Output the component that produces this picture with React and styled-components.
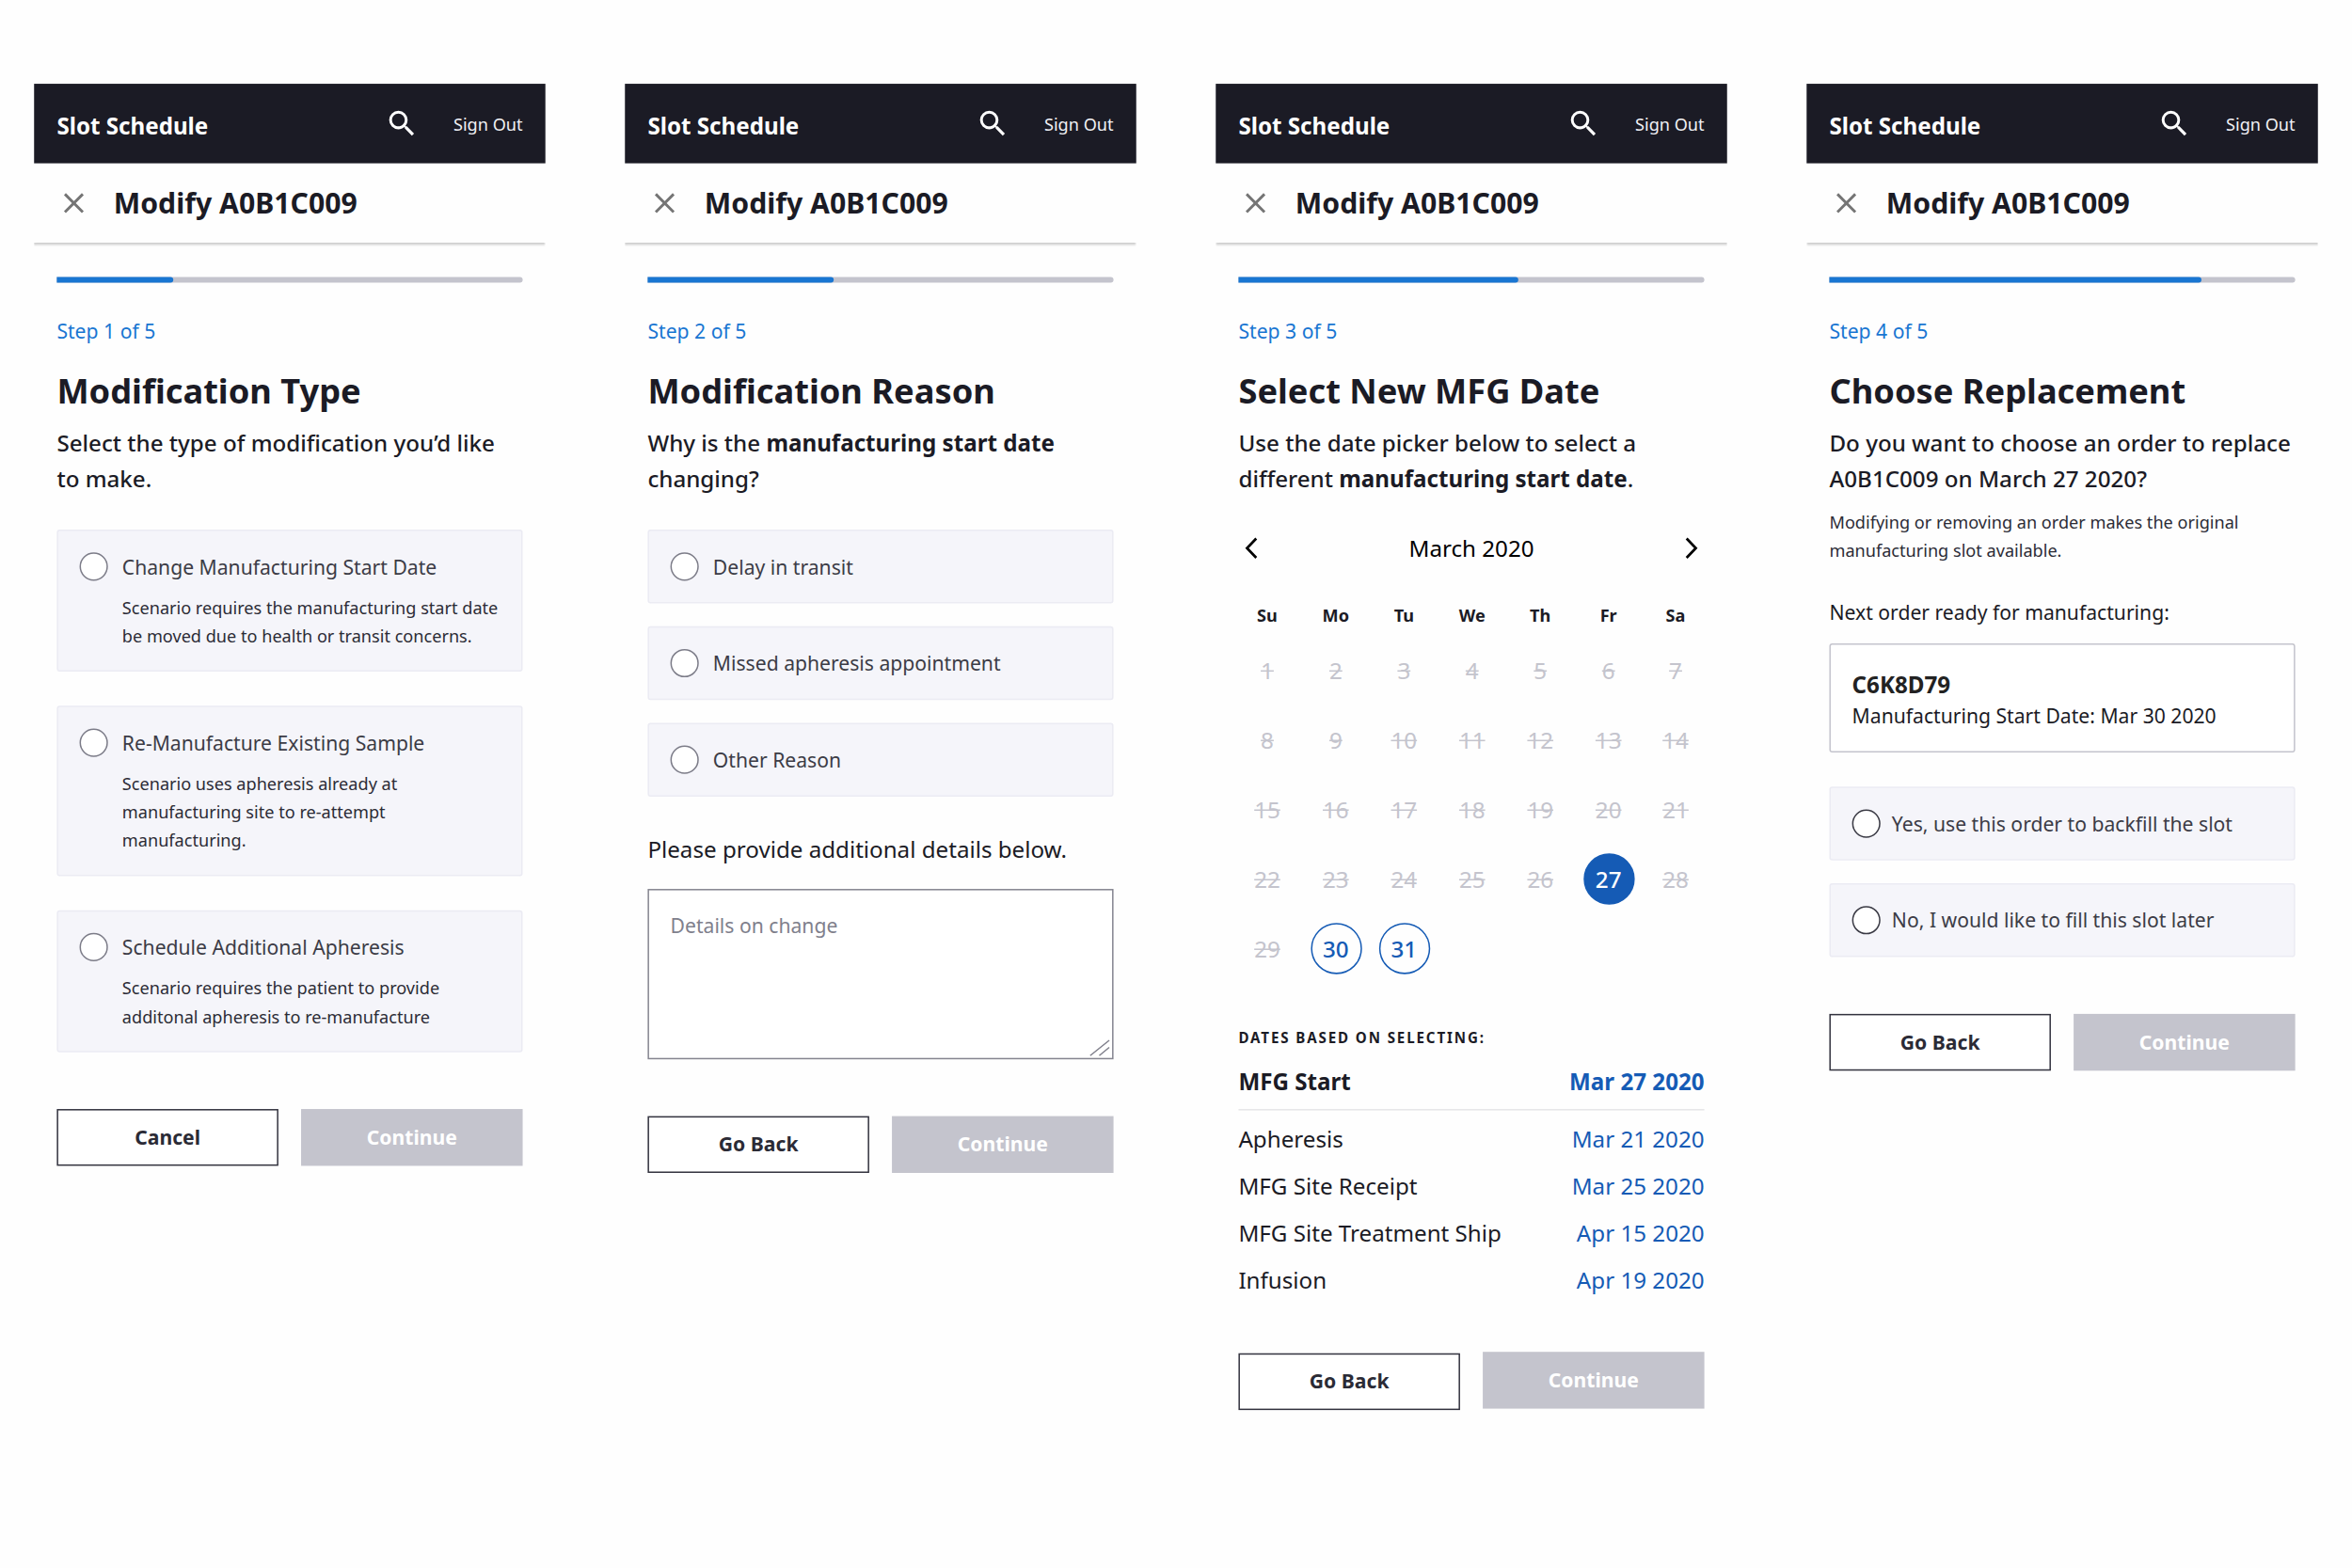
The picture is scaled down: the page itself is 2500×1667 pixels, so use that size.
import React from 'react';
import styled, { createGlobalStyle, css } from 'styled-components';
import { MdSearch } from 'react-icons/md';

const GlobalStyle = createGlobalStyle`
  * {
    box-sizing: border-box;
  }
  body {
    margin: 0;
    min-height: 1667px;
    background: #fefefe;
  }
`;

const nudge = css`
  transform: translateY(0.4px);
`;

// Screens are laid out at 360px wide and the whole board is scaled to fit 2500px
const Board = styled.main`
  display: flex;
  align-items: flex-start;
  gap: 56px;
  width: 1656px;
  height: 1104px;
  padding: 59px 24px 0;
  transform: scale(${2500 / 1656});
  transform-origin: 0 0;
  font-family: 'Noto Sans', sans-serif;
  color: #1b1b25;
`;

const Screen = styled.section`
  width: 360px;
`;

const Header = styled.header`
  display: flex;
  align-items: center;
  height: 56px;
  padding: 0 16px;
  background: #1b1b25;
  color: #fff;
`;

const Brand = styled.span`
  flex: 1;
  padding-top: 2px;
  font-size: 16px;
  font-weight: 700;
  ${nudge}
`;

const SearchIcon = styled(MdSearch)`
  width: 24px;
  height: 24px;
  margin-right: 24px;
`;

const SignOut = styled.span`
  padding-top: 1px;
  font-size: 12px;
  color: #f0f0f4;
`;

const TitleBar = styled.div`
  display: flex;
  align-items: center;
  gap: 20px;
  height: 56px;
  padding: 0 20px;
  box-shadow: 0 1.5px 1.5px 0.5px rgba(0, 0, 0, 0.19);
  clip-path: inset(0 0 -4px 0);
`;

const TitleText = styled.h1`
  margin: 0;
  font-size: 20px;
  line-height: 28px;
  font-weight: 700;
  ${nudge}
`;

const Body = styled.div`
  padding: 24px 16px 0;
`;

const Track = styled.div`
  height: 4px;
  border-radius: 0 2px 2px 0;
  background: #c4c4cd;
`;

const Fill = styled.div`
  height: 4px;
  border-radius: 0 2px 2px 0;
  background: #1976d2;
`;

const Step = styled.p`
  margin: 24px 0 0;
  font-size: 14px;
  line-height: 20px;
  color: #1976d2;
  ${nudge}
`;

const Heading = styled.h2`
  margin: 15px 0 0;
  font-size: 24px;
  line-height: 34px;
  font-weight: 700;
`;

const Lead = styled.p`
  margin: 8px 0 0;
  font-size: 16px;
  line-height: 25px;
  font-weight: 500;
  white-space: nowrap;

  b {
    font-weight: 700;
  }
`;

const Options = styled.div`
  display: flex;
  flex-direction: column;
  gap: ${props => props.$gap || 16}px;
  margin-top: ${props => props.$top || 23}px;
`;

const Option = styled.label`
  display: grid;
  grid-template-columns: 20px 1fr;
  align-content: start;
  column-gap: ${props => (props.$dark ? 8 : 10)}px;
  height: ${props => props.$height || 52}px;
  padding: 15px;
  border: 1px solid #ebebf3;
  border-radius: 2px;
  background: #f5f5fa;
`;

const Radio = styled.span`
  width: 20px;
  height: 20px;
  border: 1px solid ${props => (props.$dark ? '#3a3a44' : '#7c7c88')};
  border-radius: 50%;
  background: #fff;
`;

const OptionLabel = styled.span`
  font-size: 14px;
  line-height: 20px;
  color: #3c3c46;
  white-space: nowrap;
  ${nudge}
`;

const OptionText = styled.span`
  grid-column: 2;
  margin-top: 9px;
  font-size: 12px;
  line-height: 20px;
  color: #2c2c36;
  white-space: pre;
  ${nudge}
`;

const Actions = styled.div`
  display: grid;
  grid-template-columns: 1fr 1fr;
  gap: 16px;
  margin-top: ${props => (props.$raised ? 35 : 40)}px;
`;

const Button = styled.button`
  height: 40px;
  padding: 0 0 1px;
  font-family: inherit;
  font-size: 14px;
  font-weight: 700;
  ${props =>
    props.$primary
      ? css`
          border: 0;
          background: #c4c4cd;
          color: #fff;
          margin-top: ${props.$raised ? '-1px' : 0};
        `
      : css`
          border: 1px solid #33333f;
          background: #fff;
          color: #2b2b36;
        `}
`;

const DetailsLabel = styled.p`
  margin: 25px 0 0;
  font-size: 16px;
  line-height: 24px;
`;

const Details = styled.div`
  display: flex;
  flex-direction: column;
  justify-content: space-between;
  height: 120px;
  margin-top: 16px;
  padding: 15px 1px 1px 15px;
  border: 1px solid #858590;
  background: #fff;
  font-size: 14px;
  line-height: 20px;
  color: #80808c;

  svg {
    align-self: flex-end;
  }
`;

const Placeholder = styled.span`
  ${nudge}
`;

const MonthBar = styled.div`
  display: flex;
  align-items: center;
  justify-content: space-between;
  height: 24px;
  margin-top: 24px;
  padding: 0 4px;
  font-size: 16px;
  color: #000;
`;

const Calendar = styled.div`
  display: grid;
  grid-template-columns: 48.5px repeat(5, 48px) 46.5px;
  grid-template-rows: 20px;
  grid-auto-rows: 49px;
  margin: 25px -4px 0;
  align-items: center;
  justify-items: center;
`;

const Weekday = styled.span`
  margin-top: 1px;
  font-size: 12px;
  font-weight: 700;
`;

const Day = styled.span`
  display: flex;
  align-items: center;
  justify-content: center;
  width: 36px;
  height: 36px;
  margin-top: 8px;
  border-radius: 50%;
  font-size: 16px;
  ${props =>
    !props.$open &&
    css`
      color: #c4c4cd;
      text-decoration: line-through;
    `}
  ${props =>
    props.$open &&
    css`
      border: 1px solid #155bb5;
      color: ${props.$selected ? '#fff' : '#155bb5'};
      background: ${props.$selected ? '#155bb5' : 'transparent'};
      font-weight: 500;
    `}
`;

const Overline = styled.p`
  margin: 34px 0 0;
  font-size: 10px;
  line-height: 16px;
  font-weight: 700;
  letter-spacing: 1.25px;
  ${nudge}
`;

const DateRow = styled.div`
  display: flex;
  justify-content: space-between;
  font-size: 16px;
  line-height: 33px;

  span {
    ${nudge}
  }
  span:last-child {
    color: #155bb5;
  }
`;

const MainDateRow = styled(DateRow)`
  height: 37px;
  margin: 7px 0 4px;
  border-bottom: 1px solid #e5e5e8;
  font-weight: 700;
`;

const Note = styled.p`
  margin: 8px 0 0;
  font-size: 12px;
  line-height: 20px;
  color: #2c2c36;
`;

const NextLabel = styled.p`
  margin: 23px 0 0;
  font-size: 14px;
  line-height: 20px;
  ${nudge}
`;

const Order = styled.div`
  height: 77px;
  margin-top: 12px;
  padding: 17px 15px;
  border: 1px solid #c4c4cd;
  border-radius: 2px;
  background: #fff;
`;

const OrderId = styled.strong`
  display: block;
  font-size: 16px;
  line-height: 23px;
  font-weight: 700;
  color: #222;
`;

const OrderDate = styled.div`
  font-size: 14px;
  line-height: 20px;
  ${nudge}
`;

const CloseIcon = () => (
  <svg width="16" height="16" viewBox="0 0 16 16" fill="none" stroke="#757575" strokeWidth="1.9">
    <path d="M1.7 1.7 14.3 14.3M14.3 1.7 1.7 14.3" />
  </svg>
);

const Chevron = ({ d }) => (
  <svg width="10" height="16" viewBox="0 0 10 16" fill="none" stroke="#000" strokeWidth="1.8">
    <path d={d} />
  </svg>
);

const Frame = ({ step, progress, heading, children }) => (
  <Screen>
    <Header>
      <Brand>Slot Schedule</Brand>
      <SearchIcon />
      <SignOut>Sign Out</SignOut>
    </Header>
    <TitleBar>
      <CloseIcon />
      <TitleText>Modify A0B1C009</TitleText>
    </TitleBar>
    <Body>
      <Track>
        <Fill style={{ width: `${progress}%` }} />
      </Track>
      <Step>Step {step} of 5</Step>
      <Heading>{heading}</Heading>
      {children}
    </Body>
  </Screen>
);

const Choice = ({ label, text, height, dark }) => (
  <Option $height={height} $dark={dark}>
    <Radio $dark={dark} />
    <OptionLabel>{label}</OptionLabel>
    {text && <OptionText>{text}</OptionText>}
  </Option>
);

const Footer = ({ back = 'Go Back', raised }) => (
  <Actions $raised={raised}>
    <Button>{back}</Button>
    <Button $primary $raised={raised}>
      Continue
    </Button>
  </Actions>
);

const types = [
  {
    label: 'Change Manufacturing Start Date',
    text: 'Scenario requires the manufacturing start date\nbe moved due to health or transit concerns.',
    height: 100
  },
  {
    label: 'Re-Manufacture Existing Sample',
    text: 'Scenario uses apheresis already at\nmanufacturing site to re-attempt\nmanufacturing.',
    height: 120
  },
  {
    label: 'Schedule Additional Apheresis',
    text: 'Scenario requires the patient to provide\nadditonal apheresis to re-manufacture',
    height: 100
  }
];

const reasons = ['Delay in transit', 'Missed apheresis appointment', 'Other Reason'];

const weekdays = ['Su', 'Mo', 'Tu', 'We', 'Th', 'Fr', 'Sa'];
const days = Array.from({ length: 31 }, (_, i) => i + 1);
const openDays = [27, 30, 31];

const dates = [
  ['Apheresis', 'Mar 21 2020'],
  ['MFG Site Receipt', 'Mar 25 2020'],
  ['MFG Site Treatment Ship', 'Apr 15 2020'],
  ['Infusion', 'Apr 19 2020']
];

const App = () => (
  <>
    <GlobalStyle />
    <Board>
      <Frame step={1} progress={25} heading="Modification Type">
        <Lead>
          Select the type of modification you’d like
          <br />
          to make.
        </Lead>
        <Options $gap={24}>
          {types.map(type => (
            <Choice key={type.label} {...type} />
          ))}
        </Options>
        <Footer back="Cancel" />
      </Frame>

      <Frame step={2} progress={40} heading="Modification Reason">
        <Lead>
          Why is the <b>manufacturing start date</b>
          <br />
          changing?
        </Lead>
        <Options>
          {reasons.map(reason => (
            <Choice key={reason} label={reason} />
          ))}
        </Options>
        <DetailsLabel>Please provide additional details below.</DetailsLabel>
        <Details>
          <Placeholder>Details on change</Placeholder>
          <svg width="15" height="12" viewBox="0 0 15 12" fill="none" stroke="#80808c">
            <path d="M.6 11.4 14 .6M7 11.4 14 5.6" />
          </svg>
        </Details>
        <Footer />
      </Frame>

      <Frame step={3} progress={60} heading="Select New MFG Date">
        <Lead>
          Use the date picker below to select a
          <br />
          different <b>manufacturing start date</b>.
        </Lead>
        <MonthBar>
          <Chevron d="M8.5 1.2 2 8l6.5 6.8" />
          March 2020
          <Chevron d="M1.5 1.2 8 8l-6.5 6.8" />
        </MonthBar>
        <Calendar>
          {weekdays.map(name => (
            <Weekday key={name}>{name}</Weekday>
          ))}
          {days.map(day => (
            <Day key={day} $open={openDays.includes(day)} $selected={day === 27}>
              {day}
            </Day>
          ))}
        </Calendar>
        <Overline>DATES BASED ON SELECTING:</Overline>
        <MainDateRow>
          <span>MFG Start</span>
          <span>Mar 27 2020</span>
        </MainDateRow>
        {dates.map(([name, date]) => (
          <DateRow key={name}>
            <span>{name}</span>
            <span>{date}</span>
          </DateRow>
        ))}
        <Footer raised />
      </Frame>

      <Frame step={4} progress={80} heading="Choose Replacement">
        <Lead>
          Do you want to choose an order to replace
          <br />
          A0B1C009 on March 27 2020?
        </Lead>
        <Note>Modifying or removing an order makes the original manufacturing slot available.</Note>
        <NextLabel>Next order ready for manufacturing:</NextLabel>
        <Order>
          <OrderId>C6K8D79</OrderId>
          <OrderDate>Manufacturing Start Date: Mar 30 2020</OrderDate>
        </Order>
        <Options $top={24}>
          <Choice dark label="Yes, use this order to backfill the slot" />
          <Choice dark label="No, I would like to fill this slot later" />
        </Options>
        <Footer />
      </Frame>
    </Board>
  </>
);

export default App;
